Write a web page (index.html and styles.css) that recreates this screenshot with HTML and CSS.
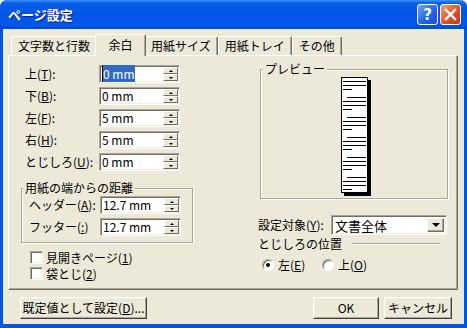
FILE: index.html
```html
<!DOCTYPE html>
<html lang="ja">
<head>
    <meta charset="UTF-8">
    <title>ページ設定</title>
    <link rel="stylesheet" href="styles.css">
</head>
<body>
    <div class="window">
        <div class="titlebar">
            <span class="title">ページ設定</span>
            <div class="caption-btns">
                <span class="cap help">?</span>
                <span class="cap close">
                    <svg width="13" height="13" viewBox="0 0 13 13"><path d="M2 2 L11 11 M11 2 L2 11" stroke="#fff" stroke-width="2.4" stroke-linecap="square"/></svg>
                </span>
            </div>
        </div>

        <div class="client">
            <div class="tabs">
                <div class="tab">文字数と行数</div>
                <div class="tab active">余白</div>
                <div class="tab">用紙サイズ</div>
                <div class="tab">用紙トレイ</div>
                <div class="tab">その他</div>
            </div>

            <div class="panel">
                <div class="col-left">
                    <div class="rows">
                        <div class="field-row">
                            <span class="lbl">上(<u>T</u>):</span>
                            <div class="spin"><span class="val"><span class="sel">0 mm</span></span><span class="arrows"><span class="arr up"></span><span class="arr down"></span></span></div>
                        </div>
                        <div class="field-row">
                            <span class="lbl">下(<u>B</u>):</span>
                            <div class="spin"><span class="val">0 mm</span><span class="arrows"><span class="arr up"></span><span class="arr down"></span></span></div>
                        </div>
                        <div class="field-row">
                            <span class="lbl">左(<u>F</u>):</span>
                            <div class="spin"><span class="val">5 mm</span><span class="arrows"><span class="arr up"></span><span class="arr down"></span></span></div>
                        </div>
                        <div class="field-row">
                            <span class="lbl">右(<u>H</u>):</span>
                            <div class="spin"><span class="val">5 mm</span><span class="arrows"><span class="arr up"></span><span class="arr down"></span></span></div>
                        </div>
                        <div class="field-row">
                            <span class="lbl">とじしろ(<u>U</u>):</span>
                            <div class="spin"><span class="val">0 mm</span><span class="arrows"><span class="arr up"></span><span class="arr down"></span></span></div>
                        </div>
                    </div>

                    <fieldset class="group edge">
                        <legend>用紙の端からの距離</legend>
                        <div class="rows">
                            <div class="field-row">
                                <span class="lbl">ヘッダー(<u>A</u>):</span>
                                <div class="spin"><span class="val">12.7 mm</span><span class="arrows"><span class="arr up"></span><span class="arr down"></span></span></div>
                            </div>
                            <div class="field-row">
                                <span class="lbl">フッター(<u>:</u>)</span>
                                <div class="spin"><span class="val">12.7 mm</span><span class="arrows"><span class="arr up"></span><span class="arr down"></span></span></div>
                            </div>
                        </div>
                    </fieldset>

                    <div class="checks">
                        <div class="check"><span class="box"></span>見開きページ(<u>1</u>)</div>
                        <div class="check"><span class="box"></span>袋とじ(<u>2</u>)</div>
                    </div>
                </div>

                <div class="col-right">
                    <fieldset class="group preview">
                        <legend>プレビュー</legend>
                        <div class="page">
                            <div class="ln"></div>
                            <div class="ln"></div>
                            <div class="ln sh"></div>
                            <div class="ln in"></div>
                            <div class="ln"></div>
                            <div class="ln"></div>
                            <div class="ln sh"></div>
                            <div class="ln in"></div>
                            <div class="ln"></div>
                            <div class="ln"></div>
                            <div class="ln sh"></div>
                            <div class="ln in"></div>
                            <div class="ln"></div>
                            <div class="ln"></div>
                            <div class="ln sh"></div>
                            <div class="ln in"></div>
                            <div class="ln"></div>
                            <div class="ln"></div>
                            <div class="ln sh"></div>
                            <div class="ln in"></div>
                            <div class="ln"></div>
                            <div class="ln"></div>
                            <div class="ln sh"></div>
                        </div>
                    </fieldset>

                    <div class="apply-row">
                        <span class="lbl">設定対象(<u>Y</u>):</span>
                        <div class="select"><span class="val">文書全体</span><span class="drop"></span></div>
                    </div>

                    <div class="heading">
                        <span>とじしろの位置</span>
                        <span class="etch"></span>
                    </div>

                    <div class="radios">
                        <div class="radio"><span class="dot on"></span>左(<u>E</u>)</div>
                        <div class="radio"><span class="dot"></span>上(<u>O</u>)</div>
                    </div>
                </div>
            </div>

            <div class="footer">
                <div class="btn wide">既定値として設定(<u>D</u>)...</div>
                <div class="spacer"></div>
                <div class="btn ok">OK</div>
                <div class="btn">キャンセル</div>
            </div>
        </div>
    </div>
</body>
</html>
```

FILE: styles.css
```css
* {
    box-sizing: border-box;
}

body {
    margin: 0;
    background: #ffffff;
    font-family: "Noto Sans CJK JP", "Noto Sans", sans-serif;
    font-size: 12px;
    color: #000;
}

u {
    text-decoration: underline;
    text-underline-offset: 1px;
}

/* window frame */
.window {
    width: 467px;
    height: 328px;
    display: flex;
    flex-direction: column;
    background: #0055e5;
    border-radius: 7px 7px 0 0;
    overflow: hidden;
}

.titlebar {
    height: 29px;
    flex: none;
    display: flex;
    align-items: center;
    padding: 0 6px 0 8px;
    background: linear-gradient(to bottom, #3d95ff 0%, #0a5fe8 10%, #0054e3 45%, #0058ee 85%, #0049d0 100%);
}

.title {
    flex: 1;
    color: #fff;
    font-weight: bold;
    font-size: 13px;
    line-height: 16px;
    text-shadow: 1px 1px #0a1c8a;
}

.caption-btns {
    display: flex;
    gap: 2px;
}

.cap {
    width: 21px;
    height: 21px;
    border: 1px solid #fff;
    border-radius: 3px;
    display: flex;
    align-items: center;
    justify-content: center;
}

.cap.help {
    background: linear-gradient(135deg, #6fa3ff, #2160e8 60%, #1a4fd0);
    color: #fff;
    font: bold 15px "DejaVu Sans", sans-serif;
}

.cap.close {
    background: linear-gradient(135deg, #f0a080, #e0502a 55%, #c83a14);
}

/* client area */
.client {
    flex: 1;
    margin: 0 3px 4px;
    background: #ece9d8;
    display: flex;
    flex-direction: column;
}

.tabs {
    display: flex;
    align-items: flex-end;
    height: 21px;
    margin: 5px 0 0 8px;
    z-index: 1;
}

.tab {
    height: 19px;
    min-width: 47px;
    padding: 0 6px;
    line-height: 18px;
    text-align: center;
    background: #ece9d8;
    border: 1px solid;
    border-color: #fff #716f64 transparent #fff;
    border-bottom: none;
    border-radius: 2px 2px 0 0;
    box-shadow: inset -1px 0 #aca899;
}

.tab.active {
    height: 22px;
    min-width: 51px;
    margin: 0 -2px -1px;
    padding: 0 8px;
    line-height: 19px;
    z-index: 2;
}

.panel {
    flex: none;
    height: 235px;
    margin: 0 6px 0 5px;
    border: 1px solid;
    border-color: #fff #716f64 #716f64 #fff;
    box-shadow: inset -1px -1px #aca899;
    display: flex;
    padding: 6px 9px 0 16px;
}

.col-left {
    width: 176px;
    padding-top: 3px;
    display: flex;
    flex-direction: column;
}

.rows {
    display: flex;
    flex-direction: column;
    gap: 4px;
}

.field-row {
    display: flex;
    align-items: center;
    height: 18px;
}

.lbl {
    width: 74px;
    line-height: 14px;
    white-space: nowrap;
}

/* sunken edit with spinner */
.spin {
    width: 81px;
    height: 18px;
    display: flex;
    background: #fff;
    border: 1px solid;
    border-color: #aca899 #fff #fff #aca899;
    box-shadow: inset 1px 1px #716f64, inset -1px -1px #f1efe2;
}

.spin .val {
    flex: 1;
    padding: 1px 0 0 2px;
    line-height: 14px;
    white-space: nowrap;
}

.sel {
    background: #316ac5;
    color: #fff;
    border-left: 1px solid #000;
}

.arrows {
    width: 15px;
    margin: 1px 1px 1px 0;
    display: flex;
    flex-direction: column;
}

.arr {
    flex: 1;
    display: flex;
    align-items: center;
    justify-content: center;
    background: #ece9d8;
    border: 1px solid;
    border-color: #fff #716f64 #716f64 #fff;
}

.arr::after {
    content: "";
    border-left: 2px solid transparent;
    border-right: 2px solid transparent;
}

.arr.up::after {
    border-bottom: 2px solid #000;
}

.arr.down::after {
    border-top: 2px solid #000;
}

/* group boxes */
.group {
    margin: 0;
    min-width: 0;
    border: 1px solid #aca899;
    box-shadow: 1px 1px 0 #fff, inset 1px 1px 0 #fff;
}

.group legend {
    padding: 0 2px;
    margin-left: 2px;
    line-height: 14px;
    background: #ece9d8;
}

.group.edge {
    width: 172px;
    margin: 10px 0 0 -4px;
    padding: 1px 0 6px 7px;
}

.group.edge legend {
    margin-left: -6px;
}

.group.edge .lbl {
    width: 71px;
}

.checks {
    margin: 7px 0 0 5px;
    display: flex;
    flex-direction: column;
    gap: 1px;
}

.check {
    display: flex;
    align-items: center;
    height: 15px;
    line-height: 14px;
}

.box {
    width: 13px;
    height: 13px;
    margin-right: 3px;
    background: #fff;
    border: 1px solid;
    border-color: #aca899 #fff #fff #aca899;
    box-shadow: inset 1px 1px #716f64, inset -1px -1px #f1efe2;
}

/* right column */
.col-right {
    width: 190px;
    margin-left: auto;
    display: flex;
    flex-direction: column;
}

.group.preview {
    width: 188px;
    height: 137px;
    margin-left: 2px;
    padding: 1px 0 0;
    display: flex;
    justify-content: center;
}

.page {
    width: 27px;
    height: 116px;
    padding: 3px 1px 0;
    background: #fff;
    border: 1px solid #000;
    box-shadow: 3px 3px 0 #000;
}

.ln {
    height: 1px;
    margin-bottom: 3px;
    background: #000;
}

.ln.in {
    margin-left: 4px;
}

.ln.sh {
    width: 9px;
    margin-bottom: 7px;
}

.apply-row {
    display: flex;
    align-items: center;
    height: 20px;
    margin-top: 16px;
}

.apply-row .lbl {
    width: 73px;
}

.select {
    width: 116px;
    height: 20px;
    display: flex;
    background: #fff;
    border: 1px solid;
    border-color: #aca899 #fff #fff #aca899;
    box-shadow: inset 1px 1px #716f64, inset -1px -1px #f1efe2;
}

.select .val {
    flex: 1;
    padding: 2px 0 0 3px;
    font-size: 13px;
    line-height: 15px;
}

.drop {
    width: 17px;
    margin: 2px 2px 2px 0;
    display: flex;
    align-items: center;
    justify-content: center;
    background: #ece9d8;
    border: 1px solid;
    border-color: #fff #716f64 #716f64 #fff;
    box-shadow: inset -1px -1px #aca899;
}

.drop::after {
    content: "";
    border-left: 4px solid transparent;
    border-right: 4px solid transparent;
    border-top: 4px solid #000;
}

.heading {
    display: flex;
    align-items: center;
    height: 14px;
    margin-top: 2px;
    line-height: 14px;
}

.etch {
    flex: 1;
    margin: 0 8px 0 10px;
    border-top: 1px solid #aca899;
    border-bottom: 1px solid #fff;
}

.radios {
    display: flex;
    margin-top: 7px;
    padding-left: 4px;
}

.radio {
    width: 60px;
    display: flex;
    align-items: center;
    height: 14px;
    line-height: 14px;
}

.dot {
    width: 12px;
    height: 12px;
    margin-right: 4px;
    border-radius: 50%;
    background: #fff;
    border: 1px solid;
    border-color: #aca899 #fff #fff #aca899;
    box-shadow: inset 1px 1px #716f64;
    display: flex;
    align-items: center;
    justify-content: center;
}

.dot.on::after {
    content: "";
    width: 4px;
    height: 4px;
    border-radius: 50%;
    background: #000;
}

/* bottom buttons */
.footer {
    display: flex;
    align-items: center;
    gap: 5px;
    margin-top: 7px;
    padding: 0 12px 0 17px;
}

.spacer {
    flex: 1;
}

.btn {
    width: 68px;
    height: 22px;
    display: flex;
    align-items: center;
    justify-content: center;
    background: #ece9d8;
    border: 1px solid;
    border-color: #fff #404040 #404040 #fff;
    box-shadow: inset -1px -1px #aca899, inset 1px 1px #f1efe2;
    line-height: 14px;
    white-space: nowrap;
}

.btn.ok {
    width: 66px;
}

.btn.wide {
    width: 127px;
}
```
